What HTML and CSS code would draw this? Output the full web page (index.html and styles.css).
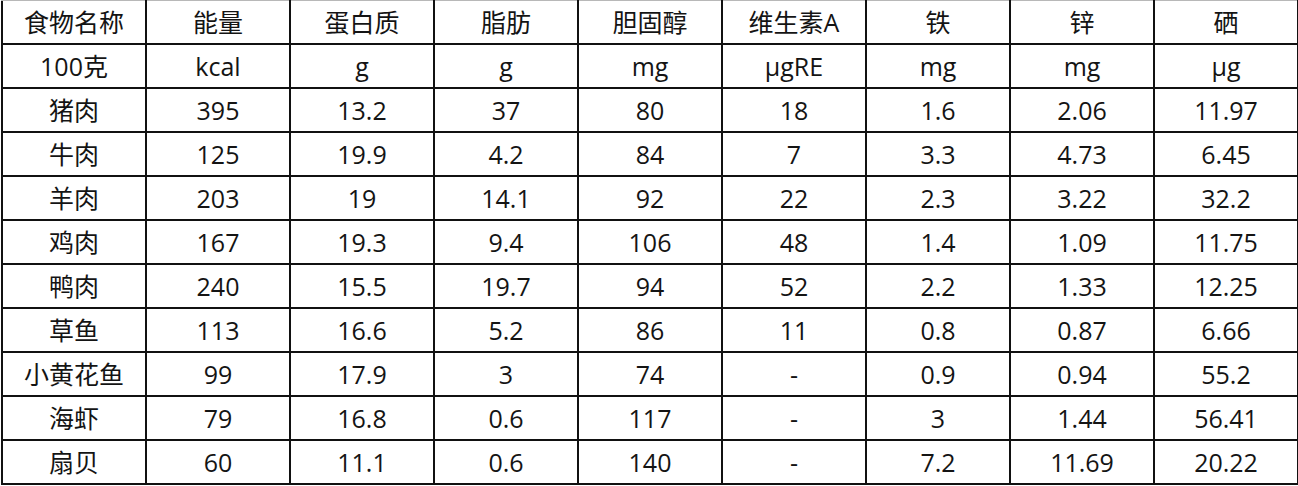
FILE: index.html
```html
<!DOCTYPE html>
<html lang="zh">
<head>
<meta charset="utf-8">
<link rel="stylesheet" href="styles.css">
</head>
<body>
<table class="nutrition">
<colgroup><col><col><col><col><col><col><col><col><col></colgroup>
<tr><td>食物名称</td><td>能量</td><td>蛋白质</td><td>脂肪</td><td>胆固醇</td><td>维生素A</td><td>铁</td><td>锌</td><td>硒</td></tr>
<tr><td>100克</td><td>kcal</td><td>g</td><td>g</td><td>mg</td><td>µgRE</td><td>mg</td><td>mg</td><td>µg</td></tr>
<tr><td>猪肉</td><td>395</td><td>13.2</td><td>37</td><td>80</td><td>18</td><td>1.6</td><td>2.06</td><td>11.97</td></tr>
<tr><td>牛肉</td><td>125</td><td>19.9</td><td>4.2</td><td>84</td><td>7</td><td>3.3</td><td>4.73</td><td>6.45</td></tr>
<tr><td>羊肉</td><td>203</td><td>19</td><td>14.1</td><td>92</td><td>22</td><td>2.3</td><td>3.22</td><td>32.2</td></tr>
<tr><td>鸡肉</td><td>167</td><td>19.3</td><td>9.4</td><td>106</td><td>48</td><td>1.4</td><td>1.09</td><td>11.75</td></tr>
<tr><td>鸭肉</td><td>240</td><td>15.5</td><td>19.7</td><td>94</td><td>52</td><td>2.2</td><td>1.33</td><td>12.25</td></tr>
<tr><td>草鱼</td><td>113</td><td>16.6</td><td>5.2</td><td>86</td><td>11</td><td>0.8</td><td>0.87</td><td>6.66</td></tr>
<tr><td>小黄花鱼</td><td>99</td><td>17.9</td><td>3</td><td>74</td><td>-</td><td>0.9</td><td>0.94</td><td>55.2</td></tr>
<tr><td>海虾</td><td>79</td><td>16.8</td><td>0.6</td><td>117</td><td>-</td><td>3</td><td>1.44</td><td>56.41</td></tr>
<tr><td>扇贝</td><td>60</td><td>11.1</td><td>0.6</td><td>140</td><td>-</td><td>7.2</td><td>11.69</td><td>20.22</td></tr>
</table>
</body>
</html>
```
FILE: styles.css
```css
html, body {
  margin: 0;
  padding: 0;
  background: #ffffff;
  overflow: hidden;
}
.nutrition {
  border-collapse: collapse;
  table-layout: fixed;
  width: 1296px;
  margin: -1px 0 0 1px;
  font-family: "Open Sans", "Noto Sans CJK SC", sans-serif;
  font-size: 25px;
  color: #141414;
}
.nutrition col {
  width: 144px;
}
.nutrition tr:first-child td {
  border-top-color: #b8b8b8;
}
.nutrition td {
  border: 2px solid #111111;
  height: 42px;
  padding: 0;
  text-align: center;
  vertical-align: middle;
  line-height: 42px;
  white-space: nowrap;
}
```
